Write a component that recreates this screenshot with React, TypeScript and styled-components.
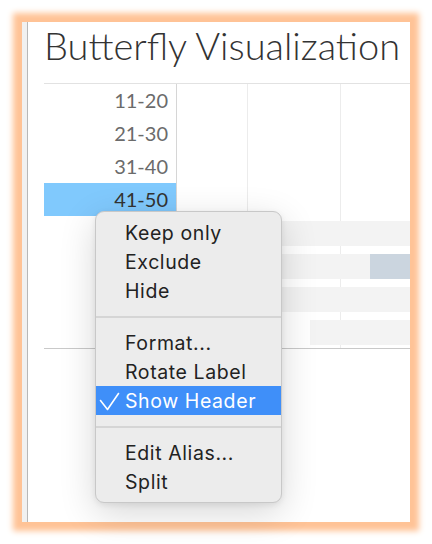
import styled, { createGlobalStyle } from "styled-components";

const GlobalStyle = createGlobalStyle`
  html, body {
    margin: 0;
    padding: 0;
    background: #ffffff;
  }
`;

type BarRow = { from: number; accentFrom?: number };

const labelRows = ["11-20", "21-30", "31-40", "41-50"];
const barRows: BarRow[] = [{ from: 30 }, { from: 30, accentFrom: 193 }, { from: 30 }, { from: 133 }];

const menuGroups = [
  [{ label: "Keep only" }, { label: "Exclude" }, { label: "Hide" }],
  [{ label: "Format..." }, { label: "Rotate Label" }, { label: "Show Header", checked: true }],
  [{ label: "Edit Alias..." }, { label: "Split" }],
];

const Check = () => (
  <svg width="22" height="22" viewBox="0 0 22 22" fill="none">
    <path d="M1.5 10.5 L8.5 19.5 L19.5 3.5" stroke="#ffffff" strokeWidth="1.6" strokeLinecap="round" strokeLinejoin="round" />
  </svg>
);

const App: React.FC = () => {
  return (
    <Page>
      <GlobalStyle />
      <Panel>
        <Rail />
        <Content>
          <Title>Butterfly Visualization</Title>
          <Table>
            {labelRows.map((label, i) => (
              <Row key={label}>
                <Label $selected={i === labelRows.length - 1}>{label}</Label>
                <Plot />
              </Row>
            ))}
            {barRows.map((bar, i) => (
              <Row key={i}>
                <Label />
                <Plot>
                  <BarTrack>
                    <Bar $from={bar.from} />
                    {bar.accentFrom !== undefined && <AccentBar />}
                  </BarTrack>
                </Plot>
              </Row>
            ))}
          </Table>
        </Content>

        <Menu>
          {menuGroups.map((group, gi) => (
            <div key={gi}>
              {gi > 0 && <Separator />}
              {group.map((item) => (
                <MenuItem key={item.label} $active={!!item.checked}>
                  <CheckSlot>{item.checked && <Check />}</CheckSlot>
                  {item.label}
                </MenuItem>
              ))}
            </div>
          ))}
        </Menu>
      </Panel>
    </Page>
  );
};

export default App;

const Page = styled.div`
  width: 432px;
  height: 544px;
  padding: 22px;
  box-sizing: border-box;
  background: #ffffff;
`;

const Panel = styled.div`
  position: relative;
  display: flex;
  width: 388px;
  height: 500px;
  background: #ffffff;
  box-shadow: 0 0 6px 9px #ffc396;
`;

const Rail = styled.div`
  width: 5px;
  flex: none;
  background: #f1f1f1;
  border-right: 1px solid #b8b8b8;
`;

const Content = styled.div`
  flex: 1;
  display: flex;
  flex-direction: column;
  padding-left: 16px;
  min-width: 0;
`;

const Title = styled.h1`
  margin: 0;
  height: 62px;
  box-sizing: border-box;
  padding-top: 1px;
  font-family: Lato, "Open Sans", sans-serif;
  font-weight: 300;
  font-size: 38px;
  line-height: 44px;
  color: #333333;
  white-space: nowrap;
  border-bottom: 1px solid #e2e2e2;
`;

const Table = styled.div`
  display: flex;
  flex-direction: column;
  border-bottom: 1px solid #c9c9c9;
`;

const Row = styled.div`
  display: flex;
  height: 33px;
`;

const Label = styled.div<{ $selected?: boolean }>`
  width: 133px;
  flex: none;
  box-sizing: border-box;
  padding-right: 8px;
  text-align: right;
  font-family: Lato, "Open Sans", sans-serif;
  font-size: 20px;
  line-height: 33px;
  color: ${(p) => (p.$selected ? "#333333" : "#6b6b6b")};
  background: ${(p) => (p.$selected ? "#80c9fd" : "transparent")};
  border-right: 1px solid #d6d6d6;
`;

const Plot = styled.div`
  flex: 1;
  background: linear-gradient(
    to right,
    transparent 70px,
    #ececec 70px,
    #ececec 71px,
    transparent 71px,
    transparent 163px,
    #ececec 163px,
    #ececec 164px,
    transparent 164px
  );
`;

const BarTrack = styled.div`
  display: flex;
  height: 100%;
  box-sizing: border-box;
  padding: 5px 0 3px;
`;

const Bar = styled.div<{ $from: number }>`
  margin-left: ${(p) => p.$from}px;
  flex: 1;
  background: #f3f3f3;
`;

const AccentBar = styled.div`
  width: 40px;
  flex: none;
  background: #cbd5df;
`;

const Menu = styled.div`
  position: absolute;
  left: 73px;
  top: 189px;
  width: 187px;
  box-sizing: border-box;
  padding: 6px 0 6px;
  background: #ececec;
  border: 1px solid #c8c8c8;
  border-radius: 9px;
  box-shadow: 0 10px 36px rgba(0, 0, 0, 0.16), 0 2px 6px rgba(0, 0, 0, 0.08);
`;

const MenuItem = styled.div<{ $active: boolean }>`
  display: flex;
  align-items: center;
  height: 29px;
  font-family: Inter, "Noto Sans", sans-serif;
  font-size: 19.5px;
  letter-spacing: 0.6px;
  color: ${(p) => (p.$active ? "#ffffff" : "#222222")};
  background: ${(p) => (p.$active ? "#3f8ff9" : "transparent")};
`;

const CheckSlot = styled.span`
  width: 29px;
  flex: none;
  display: flex;
  align-items: center;
  padding-left: 3px;
  box-sizing: border-box;
`;

const Separator = styled.div`
  height: 2px;
  margin: 11px 0 10px;
  background: #d5d5d5;
`;
